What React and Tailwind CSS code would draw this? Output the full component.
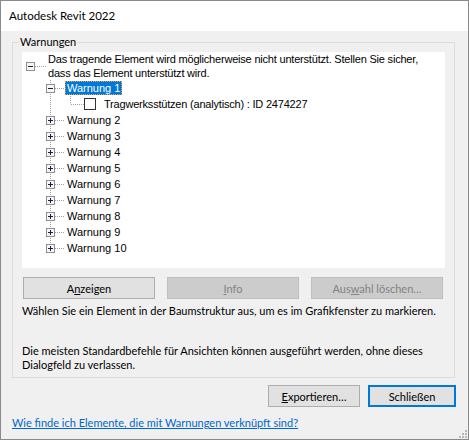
import React from 'react';

const DOT = '#a0a0a0';
const UI = { fontFamily: 'Lato, "Noto Sans", sans-serif' };

// dotted connector pieces for the tree
const VLine = ({ x, y1, y2 }) => (
    <line x1={x + 0.5} x2={x + 0.5} y1={y1} y2={y2} stroke={DOT} strokeDasharray="1 1" />
);
const HLine = ({ y, x1, x2 }) => (
    <line x1={x1} x2={x2} y1={y + 0.5} y2={y + 0.5} stroke={DOT} strokeDasharray="1 1" />
);

function Expander({ x, y, open }) {
    return (
        <g>
            <rect x={x + 0.5} y={y + 0.5} width={8} height={8} fill="#f6f6f6" stroke="#8e8f8f" />
            <line x1={x + 2} x2={x + 7} y1={y + 4.5} y2={y + 4.5} stroke="#1b1b4a" />
            {!open && <line x1={x + 4.5} x2={x + 4.5} y1={y + 2} y2={y + 7} stroke="#1b1b4a" />}
        </g>
    );
}

function Btn({ children, disabled, w = 'w-[132px]', primary }) {
    return (
        <button
            className={
                'h-[22px] text-[11px] leading-none flex items-center justify-center ' + w + ' ' +
                (disabled
                    ? 'bg-[#cccccc] border border-[#bfbfbf] text-[#838383]'
                    : primary
                        ? 'bg-[#e1e1e1] border-2 border-[#0078d7] text-black'
                        : 'bg-[#e1e1e1] border border-[#adadad] text-black')
            }
        >
            {children}
        </button>
    );
}

const warnings = [2, 3, 4, 5, 6, 7, 8, 9, 10];

export default function App() {
    return (
        <div className="w-[469px] h-[440px] border border-[#8a8a8a] flex flex-col bg-[#f0f0f0] text-black" style={UI}>
            {/* title bar */}
            <div className="h-[30px] bg-white flex items-center pl-[8px] text-[11.5px]">Autodesk Revit 2022</div>

            <div className="relative flex-1 pt-[11px] pl-[11px]">
                {/* group box */}
                <div className="relative w-[443px] h-[336px] border border-[#dcdcdc]">
                    <span className="absolute -top-[9px] left-[6px] px-[1px] bg-[#f0f0f0] text-[11px] leading-[16px]">Warnungen</span>

                    {/* tree */}
                    <div className="ml-[9px] mt-[9px] w-[423px] h-[216px] bg-white text-[11px] tracking-[-0.2px]" style={{ fontFamily: '"Liberation Sans", Arial, sans-serif' }}>
                        <div className="flex items-center h-[28px]">
                            <svg width="26" height="28" className="shrink-0">
                                <HLine y={14} x1={13} x2={25} />
                                <Expander x={4} y={10} open />
                            </svg>
                            <div className="leading-[14px]">
                                Das tragende Element wird möglicherweise nicht unterstützt. Stellen Sie sicher,<br />
                                dass das Element unterstützt wird.
                            </div>
                        </div>

                        <div className="flex items-center h-[16px]">
                            <svg width="43" height="16" className="shrink-0">
                                <VLine x={28} y1={0} y2={16} />
                                <HLine y={8} x1={33} x2={43} />
                                <Expander x={24} y={4} open />
                            </svg>
                            <span className="h-[14px] leading-[12px] px-[1px] tracking-normal bg-[#0078d7] text-white border border-dotted border-[#f0a040]">Warnung 1</span>
                        </div>

                        <div className="flex items-center h-[16px]">
                            <svg width="74" height="16" className="shrink-0">
                                <VLine x={28} y1={0} y2={16} />
                                <VLine x={48} y1={0} y2={8} />
                                <HLine y={8} x1={49} x2={62} />
                                <rect x={62.5} y={2.5} width={11} height={11} fill="#fff" stroke="#333" />
                            </svg>
                            <span className="ml-[8px]">Tragwerksstützen (analytisch) : ID 2474227</span>
                        </div>

                        {warnings.map((n) => (
                            <div key={n} className="flex items-center h-[16px]">
                                <svg width="43" height="16" className="shrink-0">
                                    <VLine x={28} y1={0} y2={n === 10 ? 8 : 16} />
                                    <HLine y={8} x1={33} x2={43} />
                                    <Expander x={24} y={4} />
                                </svg>
                                <span className="px-[2px] tracking-normal">Warnung {n}</span>
                            </div>
                        ))}
                    </div>

                    {/* action buttons */}
                    <div className="flex gap-[12px] ml-[10px] mt-[9px]">
                        <Btn>A<span className="underline">n</span>zeigen</Btn>
                        <Btn disabled><span className="underline">I</span>nfo</Btn>
                        <Btn disabled>Aus<span className="underline">w</span>ahl löschen…</Btn>
                    </div>

                    <p className="ml-[9px] mt-[4px] text-[11px] leading-[16px] whitespace-nowrap">
                        Wählen Sie ein Element in der Baumstruktur aus, um es im Grafikfenster zu markieren.
                    </p>
                    <p className="ml-[9px] mt-[25px] text-[11px] leading-[14px] whitespace-nowrap">
                        Die meisten Standardbefehle für Ansichten können ausgeführt werden, ohne dieses<br />
                        Dialogfeld zu verlassen.
                    </p>
                </div>

                {/* dialog buttons */}
                <div className="flex justify-end gap-[8px] mt-[7px] pr-[12px]">
                    <Btn w="w-[92px]"><span className="underline">E</span>xportieren…</Btn>
                    <Btn w="w-[88px]" primary>Schließen</Btn>
                </div>

                <a href="#" className="block ml-[0px] mt-[8px] text-[11px] leading-[16px] text-[#0066cc] underline">
                    Wie finde ich Elemente, die mit Warnungen verknüpft sind?
                </a>

                {/* resize grip */}
                <svg width="8" height="8" className="absolute right-[1px] bottom-[1px]">
                    {[[6, 0], [6, 3], [3, 3], [6, 6], [3, 6], [0, 6]].map(([x, y], i) => (
                        <rect key={i} x={x} y={y} width={2} height={2} fill="#b8b8b8" />
                    ))}
                </svg>
            </div>
        </div>
    );
}
